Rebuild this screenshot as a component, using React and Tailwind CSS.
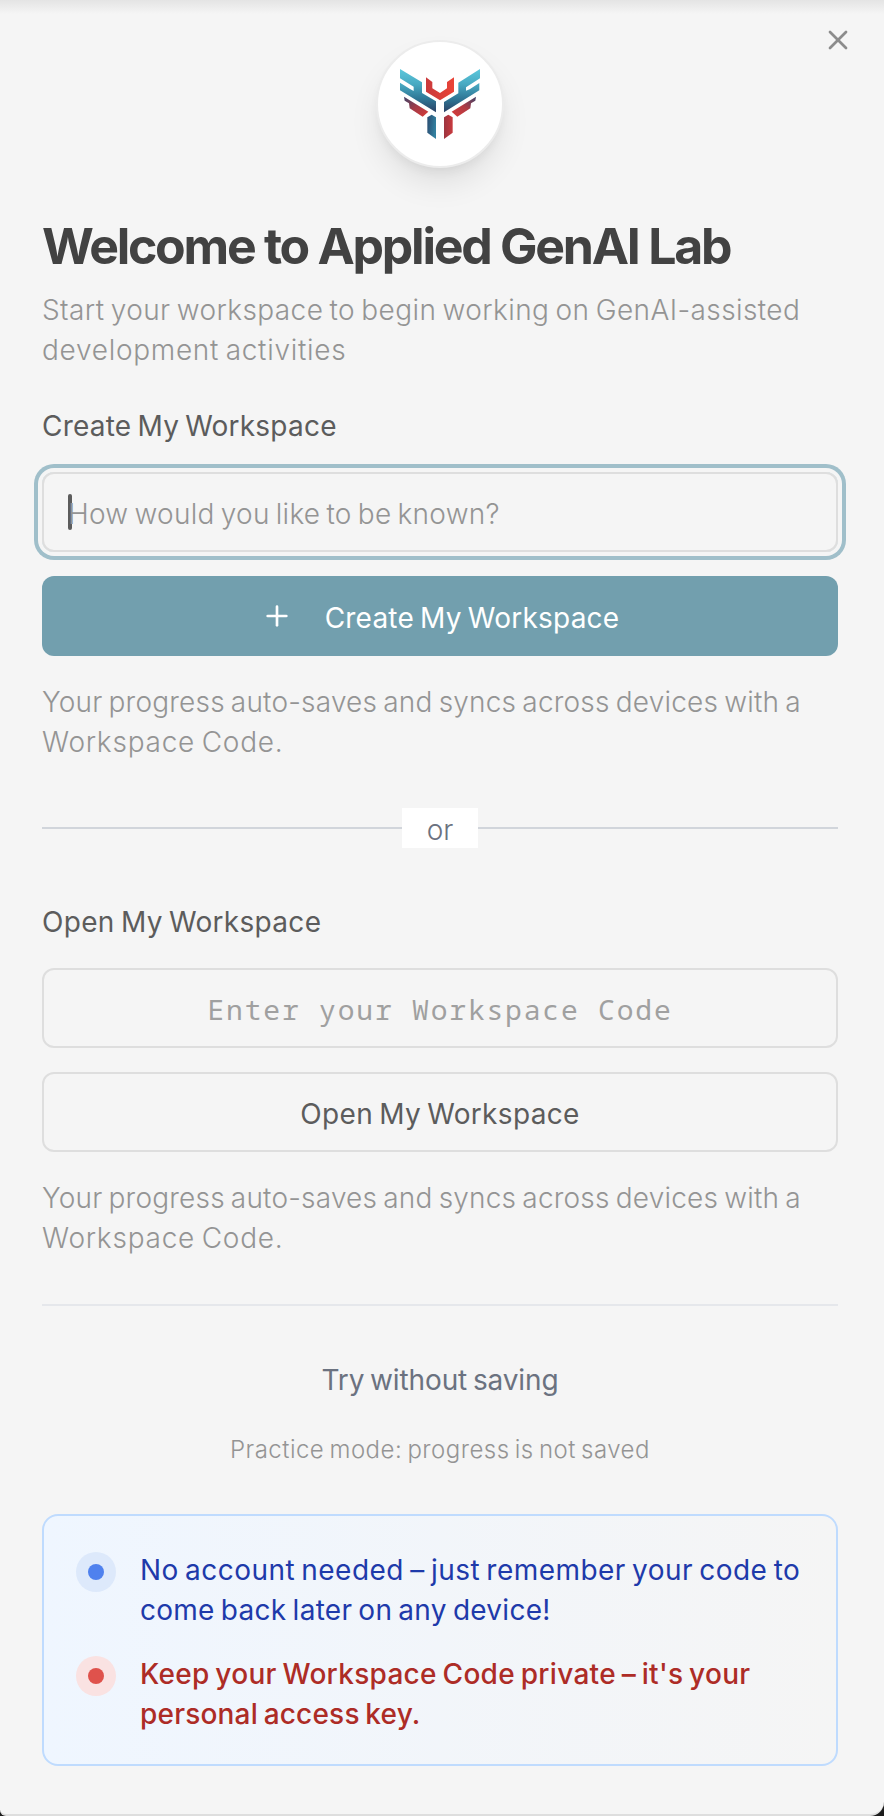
import { Plus, X } from 'lucide-react';

function Logo() {
  return (
    <svg width="88" height="80" viewBox="0 0 264 240" aria-hidden="true">
      <defs>
        <linearGradient id="wing" gradientUnits="userSpaceOnUse" x1="0" y1="15" x2="0" y2="146">
          <stop offset="0" stopColor="#5cc8dc" />
          <stop offset="0.35" stopColor="#48a9c2" />
          <stop offset="0.68" stopColor="#2f7796" />
          <stop offset="1" stopColor="#2b3f63" />
        </linearGradient>
        <linearGradient id="crest" x1="0" y1="0" x2="1" y2="0">
          <stop offset="0" stopColor="#c93a3c" />
          <stop offset="1" stopColor="#ea4437" />
        </linearGradient>
        <linearGradient id="featherLeft" x1="0" y1="0" x2="1" y2="1">
          <stop offset="0" stopColor="#3d4369" />
          <stop offset="0.5" stopColor="#a33b48" />
          <stop offset="1" stopColor="#d93c38" />
        </linearGradient>
        <linearGradient id="featherRight" x1="1" y1="0" x2="0" y2="1">
          <stop offset="0" stopColor="#3d4369" />
          <stop offset="0.5" stopColor="#b13b44" />
          <stop offset="1" stopColor="#d93c38" />
        </linearGradient>
        <linearGradient id="stemLeft" x1="0" y1="0" x2="1" y2="0.3">
          <stop offset="0" stopColor="#2b4b70" />
          <stop offset="1" stopColor="#33809f" />
        </linearGradient>
        <linearGradient id="stemRight" x1="0" y1="0" x2="1" y2="0">
          <stop offset="0" stopColor="#9c3540" />
          <stop offset="1" stopColor="#c93a3e" />
        </linearGradient>
      </defs>
      <polygon fill="url(#wing)" points="12,15 78,55 78,87 120,112 120,145 12,79 12,56 42,75 53,81 53,68 12,43" />
      <polygon fill="url(#wing)" points="252,15 187,56 187,88 144,114 144,145 250,79 250,57 221,76 210,80 210,70 252,43" />
      <polygon fill="url(#crest)" points="90,40 109,54 109,73 132,87 153,73 153,54 174,40 174,83 132,109 90,83" />
      <polygon fill="url(#featherLeft)" points="24,98 97,143 80,158 41,133 39,118 26,110" />
      <polygon fill="url(#featherRight)" points="240,98 167,143 184,158 223,133 225,118 238,110" />
      <polygon fill="url(#stemLeft)" points="94,160 107,152 120,160 120,225 94,206" />
      <polygon fill="url(#stemRight)" points="144,160 157,152 170,160 170,206 144,225" />
    </svg>
  );
}

function Helper() {
  return (
    <p className="mt-[26px] text-[28px] leading-[40px] font-light whitespace-nowrap text-[#949494]">
      <span className="block tracking-[0.2px]">Your progress auto-saves and syncs across devices with a</span>
      <span className="block tracking-[0.76px]">Workspace Code.</span>
    </p>
  );
}

export default function App() {
  return (
    <div className="h-[1816px] w-full overflow-hidden bg-[#1c1c1c] font-['Inter',sans-serif]">
      <main className="relative flex h-full flex-col rounded-br-[14px] rounded-bl-[6px] border-b-2 border-[#dedede] bg-[#f5f5f5] pr-[46px] pl-[42px] [word-spacing:-2px]">
        <div className="absolute inset-x-0 top-0 h-[14px] bg-linear-to-b from-[#e4e4e4] to-[#f5f5f5]" />
        <button className="absolute top-6 right-[30px] text-[#8c8c8c]" aria-label="Close">
          <X size={32} strokeWidth={2} />
        </button>

        <div className="mt-[40px] flex size-[128px] shrink-0 items-center justify-center self-center rounded-full border-2 border-[#ececec] bg-white shadow-[0_18px_34px_-6px_rgba(0,0,0,0.11),0_6px_12px_-4px_rgba(0,0,0,0.07)]">
          <Logo />
        </div>

        <h1 className="mt-[48px] text-[50px] leading-[60px] font-bold tracking-[-2.26px] whitespace-nowrap text-[#424242] [word-spacing:0]">
          Welcome to Applied GenAI Lab
        </h1>
        <p className="mt-[14px] text-[28px] leading-[40px] font-light whitespace-nowrap text-[#949494]">
          <span className="block tracking-[0.4px]">Start your workspace to begin working on GenAI-assisted</span>
          <span className="block tracking-[0.71px]">development activities</span>
        </p>

        <h2 className="mt-[36px] text-[28px] leading-[40px] font-normal tracking-[0.22px] text-[#5c5c5c]">
          Create My Workspace
        </h2>
        <div className="mt-[26px] flex h-[80px] shrink-0 items-center rounded-xl border-2 border-[#dedede] px-6 ring-4 ring-[#a0bfca] ring-offset-4 ring-offset-[#f5f5f5]">
          <span className="h-9 w-1 shrink-0 rounded-full bg-[#5c5c5c]" />
          <span className="-ml-1 pt-1 text-[28px] leading-[40px] font-light tracking-[0.26px] text-[#949494]">
            How would you like to be known?
          </span>
        </div>
        <button className="mt-6 flex h-[80px] shrink-0 items-center justify-center gap-8 rounded-xl bg-[#729fae] text-white [word-spacing:-2px]">
          <Plus size={32} strokeWidth={2} />
          <span className="pt-1 text-[28px] leading-[40px] font-normal tracking-[0.22px]">Create My Workspace</span>
        </button>
        <Helper />

        <div className="mt-[46px] flex items-center">
          <div className="h-[2px] flex-1 bg-[#d1d5db]" />
          <span className="flex h-[40px] w-[76px] items-center justify-center bg-white pt-1 text-[28px] leading-[40px] font-light text-[#6b7280]">
            or
          </span>
          <div className="h-[2px] flex-1 bg-[#d1d5db]" />
        </div>

        <h2 className="mt-[54px] text-[28px] leading-[40px] font-normal tracking-[0.32px] text-[#5c5c5c]">
          Open My Workspace
        </h2>
        <div className="mt-[26px] flex h-[80px] shrink-0 items-center justify-center rounded-xl border-2 border-[#dedede] pt-px font-['Noto_Sans_Mono',monospace] text-[28px] leading-[40px] font-normal tracking-[1.8px] text-[#a0a0a0] [word-spacing:0]">
          Enter your Workspace Code
        </div>
        <button className="mt-6 flex h-[80px] shrink-0 items-center justify-center rounded-xl border-2 border-[#dedede] pt-1 text-[28px] leading-[40px] font-normal tracking-[0.32px] text-[#5c5c5c] [word-spacing:-2px]">
          Open My Workspace
        </button>
        <Helper />

        <div className="mt-[46px] h-[2px] shrink-0 bg-[#e5e7eb]" />
        <button className="mt-[54px] text-[28px] leading-[40px] font-normal tracking-[-0.12px] text-[#6b7280] [word-spacing:-2px]">
          Try without saving
        </button>
        <p className="mt-8 text-center text-[24px] leading-[36px] font-light tracking-[0.48px] text-[#949494]">
          Practice mode: progress is not saved
        </p>

        <ul className="mt-[46px] flex h-[252px] shrink-0 flex-col gap-6 rounded-2xl border-2 border-[#bfdbfe] bg-linear-to-r from-[#eff6ff] to-[#f5f5f5] pt-[34px] pl-8 text-[28px] leading-[40px] whitespace-nowrap">
          <li className="flex gap-6 font-normal text-[#1e3aaa]">
            <span className="mt-[2px] flex size-10 items-center justify-center rounded-full bg-[#dde9fb]">
              <span className="size-4 rounded-full bg-[#4f81ee]" />
            </span>
            <p>
              <span className="block tracking-[0.45px]">No account needed – just remember your code to</span>
              <span className="block tracking-[0.27px]">come back later on any device!</span>
            </p>
          </li>
          <li className="flex gap-6 font-medium text-[#ad2c26]">
            <span className="mt-[2px] flex size-10 items-center justify-center rounded-full bg-[#fae2e2]">
              <span className="size-4 rounded-full bg-[#df524c]" />
            </span>
            <p>
              <span className="block tracking-[0.3px]">Keep your Workspace Code private – it's your</span>
              <span className="block tracking-[0.2px]">personal access key.</span>
            </p>
          </li>
        </ul>
      </main>
    </div>
  );
}
